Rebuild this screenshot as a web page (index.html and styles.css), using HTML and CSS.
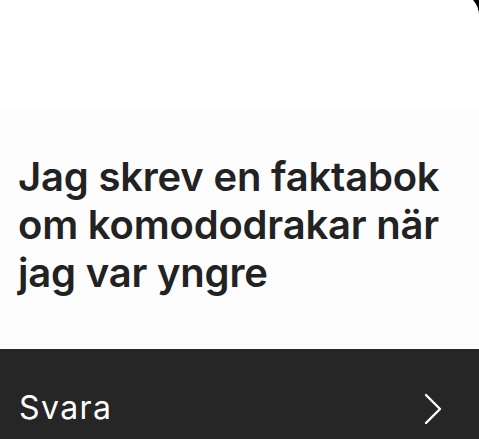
FILE: index.html
```html
<!DOCTYPE html>
<html lang="sv">
<head>
<meta charset="utf-8">
<title>Svara</title>
<link rel="stylesheet" href="styles.css">
</head>
<body>
<div class="screen">
  <div class="top"></div>
  <div class="content">
    <h1 class="headline">Jag skrev en faktabok om komododrakar när jag var yngre</h1>
  </div>
  <div class="bar">
    <span class="bar-label">Svara</span>
    <svg class="chevron" width="18" height="32" viewBox="0 0 18 32" aria-hidden="true">
      <path d="M2 2 L16 16 L2 30" fill="none" stroke="#fff" stroke-width="2.4" stroke-linecap="round" stroke-linejoin="round"/>
    </svg>
  </div>
</div>
</body>
</html>
```

FILE: styles.css
```css
html {
  background: #000;
}
body {
  margin: 0;
  overflow: hidden;
  font-family: Inter, "Noto Sans", "Liberation Sans", sans-serif;
}
.screen {
  margin-top: -8px;
  width: 479px;
  background: #fff;
  border-top-right-radius: 24px;
  overflow: hidden;
}
.top {
  height: 117px;
  background: #fff;
}
.content {
  background: #fdfdfd;
  padding: 44px 18px 52px 18px;
}
.headline {
  margin: 0;
  font-size: 40px;
  line-height: 48px;
  font-weight: 600;
  color: #222;
  letter-spacing: -0.2px;
}
.bar {
  background: #262626;
  height: 90px;
  padding: 40px 37px 0 19px;
  box-sizing: border-box;
  display: flex;
  align-items: flex-start;
  justify-content: space-between;
}
.bar-label {
  color: #fff;
  font-size: 32px;
  line-height: 38px;
  font-weight: 400;
  letter-spacing: 1.4px;
}
.chevron {
  margin-top: 4px;
}
```
